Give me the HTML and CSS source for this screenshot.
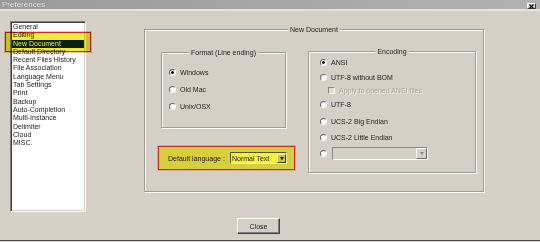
FILE: index.html
```html
<!DOCTYPE html>
<html lang="en">
<head>
    <meta charset="UTF-8">
    <title>Preferences</title>
    <link rel="stylesheet" href="styles.css">
</head>
<body>
    <div class="window">
        <div class="titlebar">
            <span class="title">Preferences</span>
            <span class="xbtn"><svg width="7" height="5" viewBox="0 0 7 5"><path d="M1.5 0.5l4 4M5.5 0.5l-4 4" stroke="#111" stroke-width="1.2"/></svg></span>
        </div>

        <div class="content">
            <div class="listwrap">
                <div class="list">
                    <div class="item">General</div>
                    <div class="item">Editing</div>
                    <div class="item selected">New Document</div>
                    <div class="item">Default Directory</div>
                    <div class="item">Recent Files History</div>
                    <div class="item">File Association</div>
                    <div class="item">Language Menu</div>
                    <div class="item">Tab Settings</div>
                    <div class="item">Print</div>
                    <div class="item">Backup</div>
                    <div class="item">Auto-Completion</div>
                    <div class="item">Multi-Instance</div>
                    <div class="item">Delimiter</div>
                    <div class="item">Cloud</div>
                    <div class="item">MISC.</div>
                </div>
                <!-- marker highlight drawn over the list -->
                <div class="mark-list"></div>
            </div>

            <div class="right">
                <div class="group outer">
                    <div class="gtitle">New Document</div>
                    <div class="cols">
                        <div class="leftcol">
                            <div class="group format">
                                <div class="gtitle">Format (Line ending)</div>
                                <div class="opts">
                                    <div class="opt"><span class="radio on"></span>Windows</div>
                                    <div class="opt"><span class="radio"></span>Old Mac</div>
                                    <div class="opt"><span class="radio"></span>Unix/OSX</div>
                                </div>
                            </div>
                            <div class="langbox">
                                <span>Default language :</span>
                                <div class="combo lang">
                                    <span class="ctext">Normal Text</span>
                                    <span class="dd"><i class="arrow"></i></span>
                                </div>
                            </div>
                        </div>

                        <div class="group encoding">
                            <div class="gtitle">Encoding</div>
                            <div class="enc-rows">
                                <div class="opt"><span class="radio on"></span>ANSI</div>
                                <div class="opt"><span class="radio"></span>UTF-8 without BOM</div>
                                <div class="opt sub disabled"><span class="check"></span>Apply to opened ANSI files</div>
                                <div class="opt"><span class="radio"></span>UTF-8</div>
                                <div class="opt"><span class="radio"></span>UCS-2 Big Endian</div>
                                <div class="opt"><span class="radio"></span>UCS-2 Little Endian</div>
                                <div class="opt">
                                    <span class="radio"></span>
                                    <div class="combo off"><span class="dd"><i class="arrow grey"></i></span></div>
                                </div>
                            </div>
                        </div>
                    </div>
                </div>
                <button class="close">Close</button>
            </div>
        </div>
    </div>
</body>
</html>
```

FILE: styles.css
```css
body{
    margin: 0;
    background-color: #d4d0c8;
    font-family: "Liberation Sans", Arial, sans-serif;
    font-size: 7px;
    color: #1c1c1c;
}
.window{
    width: 540px;
    height: 240px;
    border-bottom: 1px solid #4a4a4a;
    overflow: hidden;
}

/* title bar */
.titlebar{
    height: 9px;
    border-bottom: 2px solid #e6e4de;
    background: linear-gradient(90deg, #9a9a9a, #b2b2b2);
    display: flex;
    justify-content: space-between;
    align-items: flex-start;
    overflow: hidden;
}
.title{
    font-size: 8px;
    line-height: 9px;
    margin-left: 2px;
    color: #f4f4f4;
    text-shadow: 0 0 1px #555;
}
.xbtn{
    width: 9px;
    height: 6px;
    margin: 3px 4px 0 0;
    box-sizing: border-box;
    background-color: #d4d0c8;
    border: 1px solid;
    border-color: #fff #404040 #404040 #fff;
    display: flex;
    align-items: center;
    justify-content: center;
}

.content{
    display: flex;
    align-items: flex-start;
    padding-left: 10px;
}

/* left list */
.listwrap{
    position: relative;
    margin-top: 10px;
}
.list{
    width: 76px;
    height: 191px;
    box-sizing: border-box;
    padding: 1px;
    background-color: #fff;
    border: 1px solid;
    border-color: #808080 #fff #fff #808080;
    box-shadow: inset 1px 1px #404040, inset -1px -1px #d4d0c8;
}
.item{
    height: 8.3px;
    line-height: 8.3px;
    padding-left: 1px;
    white-space: nowrap;
}
.selected{
    background-color: #0a246a;
    color: #fff;
}
.mark-list{
    position: absolute;
    left: -5px;
    top: 11px;
    width: 86px;
    height: 20px;
    box-sizing: border-box;
    border: 1px solid #cc2a1a;
    background-color: #f2ea34;
    box-shadow: 0 0 0 1px rgba(230, 130, 60, .45);
    mix-blend-mode: multiply;
}

/* right side */
.right{
    margin-left: 58px;
    margin-top: 18px;
}
.group{
    box-sizing: border-box;
    border: 1px solid #a09c95;
    box-shadow: inset 1px 1px #fcfcfb, 1px 1px #fcfcfb;
}
.gtitle{
    display: table;
    margin: -5px auto 0;
    padding: 0 2px;
    line-height: 9px;
    background-color: #d4d0c8;
}
.outer{
    width: 340px;
    height: 163px;
}
.cols{
    display: flex;
    align-items: flex-start;
    margin-top: 17px;
    padding-left: 16px;
}
.format{
    width: 125px;
    height: 76px;
    margin-top: 1px;
}
.opts{
    padding: 7px 0 0 7px;
}
.opt{
    display: flex;
    align-items: center;
    height: 17px;
    white-space: nowrap;
}
.radio{
    flex: none;
    width: 7px;
    height: 7px;
    box-sizing: border-box;
    margin-right: 4px;
    border-radius: 50%;
    border: 1px solid;
    border-color: #6c6962 #f6f5f2 #f6f5f2 #6c6962;
    background-color: #fff;
}
.radio.on{
    background: radial-gradient(circle, #111 1.1px, #fff 1.7px);
}
.check{
    flex: none;
    width: 7px;
    height: 7px;
    box-sizing: border-box;
    margin-right: 4px;
    border: 1px solid;
    border-color: #8a8780 #fff #fff #8a8780;
    background-color: #e2dfd8;
}
.disabled{
    color: #a8a49c;
    text-shadow: 1px 1px #f2f1ee;
}

.langbox{
    width: 137px;
    height: 24px;
    box-sizing: border-box;
    margin: 18px 0 0 -3px;
    padding: 0 7px 0 9px;
    display: flex;
    align-items: center;
    justify-content: space-between;
    border: 1px solid #c42a1c;
    background-color: #d6ce3a;
    box-shadow: 0 0 0 1px rgba(225, 130, 60, .5);
}
.combo{
    box-sizing: border-box;
    display: flex;
    align-items: center;
    border: 1px solid;
}
.combo.lang{
    width: 57px;
    height: 12px;
    border-color: #5c5820 #f8f4a0 #f8f4a0 #5c5820;
    background-color: #f6f040;
}
.ctext{
    padding-left: 1px;
}
.dd{
    margin-left: auto;
    width: 9px;
    height: 9px;
    box-sizing: border-box;
    display: flex;
    align-items: center;
    justify-content: center;
    border: 1px solid;
    border-color: #f4f0a0 #3a3810 #3a3810 #f4f0a0;
    background-color: #cec63a;
}
.arrow{
    width: 0;
    height: 0;
    border-left: 2.5px solid transparent;
    border-right: 2.5px solid transparent;
    border-top: 3px solid #000;
}
.arrow.grey{
    border-top-color: #8c8880;
}

.encoding{
    width: 168px;
    height: 122px;
    margin-left: 13px;
}
.enc-rows{
    display: grid;
    grid-template-rows: 12px 18px 9px 18px 16px 16px 17px;
    padding-left: 11px;
}
.enc-rows .opt{
    height: auto;
}
.sub{
    padding-left: 8px;
}
.combo.off{
    width: 96px;
    height: 13px;
    margin-left: 1px;
    border-color: #8a8780 #fff #fff #8a8780;
    background-color: #d4d0c8;
}
.combo.off .dd{
    width: 11px;
    height: 11px;
    border-color: #fff #6c6962 #6c6962 #fff;
    background-color: #d4d0c8;
}

.close{
    display: block;
    margin: 26px 0 0 93px;
    width: 43px;
    height: 16px;
    padding: 0;
    font: inherit;
    color: #1c1c1c;
    background-color: #d4d0c8;
    border: 1px solid;
    border-color: #fff #404040 #404040 #fff;
    box-shadow: inset -1px -1px #808080;
}
```
